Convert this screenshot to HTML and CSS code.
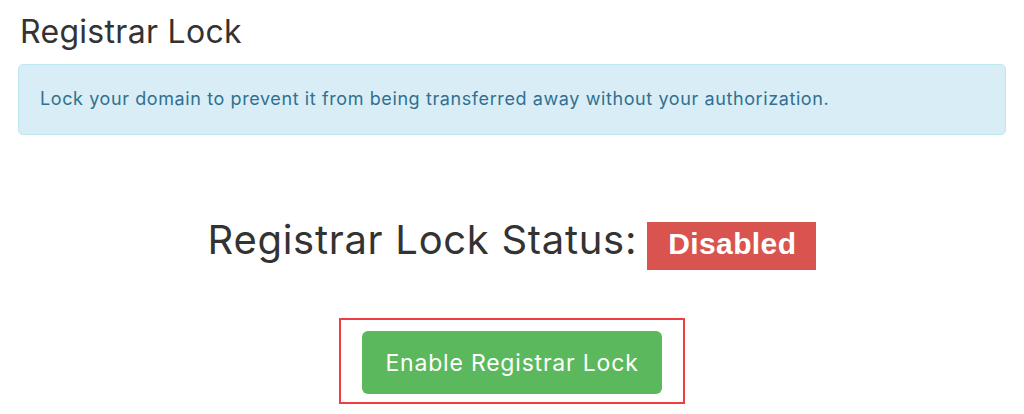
FILE: index.html
```html
<!DOCTYPE html>
<html lang="en">
<head>
    <meta charset="UTF-8">
    <meta name="viewport" content="width=device-width, initial-scale=1.0">
    <title>Registrar Lock</title>
    <link rel="stylesheet" href="styles.css">
</head>
<body>

    <div class="page">
        <h1 class="page-title">Registrar Lock</h1>

        <!-- Info alert -->
        <div class="alert-info">
            Lock your domain to prevent it from being transferred away without your authorization.
        </div>

        <!-- Status + action -->
        <div class="lock-status">
            <h2 class="status-line">
                <span class="status-text">Registrar Lock Status:</span>
                <span class="label-danger">Disabled</span>
            </h2>

            <div class="highlight-box">
                <button type="button" class="btn-success">Enable Registrar Lock</button>
            </div>
        </div>
    </div>

</body>
</html>
```

FILE: styles.css
```css
/* Global Styles */
body {
    margin: 0;
    background-color: #fff;
    color: #333;
    font-family: 'Inter', 'Noto Sans', Arial, sans-serif;
}

.page {
    padding: 0 18px;
}

.page-title {
    font-size: 32px;
    font-weight: 400;
    letter-spacing: 0.3px;
    line-height: 40px;
    margin: 12px 0 0 2px;
}

/* Alert */
.alert-info {
    margin-top: 12px;
    background-color: #d9edf7;
    border: 1px solid #bce8f1;
    border-radius: 5px;
    color: #31708f;
    font-size: 18px;
    letter-spacing: 0.6px;
    line-height: 22px;
    padding: 23px 21px 24px;
}

/* Status section */
.lock-status {
    display: flex;
    flex-direction: column;
    align-items: center;
    margin-top: 81px;
}

.status-line {
    display: flex;
    align-items: flex-start;
    gap: 10px;
    margin: 0;
    font-size: 40px;
    font-weight: 400;
    line-height: 48px;
}

.status-text {
    letter-spacing: 0.7px;
}

.label-danger {
    margin-top: 6px;
    background-color: #d9534f;
    color: #fff;
    font-family: 'Liberation Sans', Arial, sans-serif;
    font-weight: 700;
    font-size: 30px;
    letter-spacing: 0.4px;
    line-height: 44px;
    padding: 0 20px 4px 21px;
}

.highlight-box {
    margin-top: 48px;
    border: 2px solid #ee3e43;
    padding: 11px 21px 8px;
}

.btn-success {
    display: block;
    background-color: #5cb85c;
    color: #fff;
    border: none;
    border-radius: 6px;
    font-family: 'Inter', 'Noto Sans', Arial, sans-serif;
    font-size: 23px;
    letter-spacing: 0.8px;
    width: 300px;
    height: 63px;
    padding: 0;
    cursor: pointer;
}
```
